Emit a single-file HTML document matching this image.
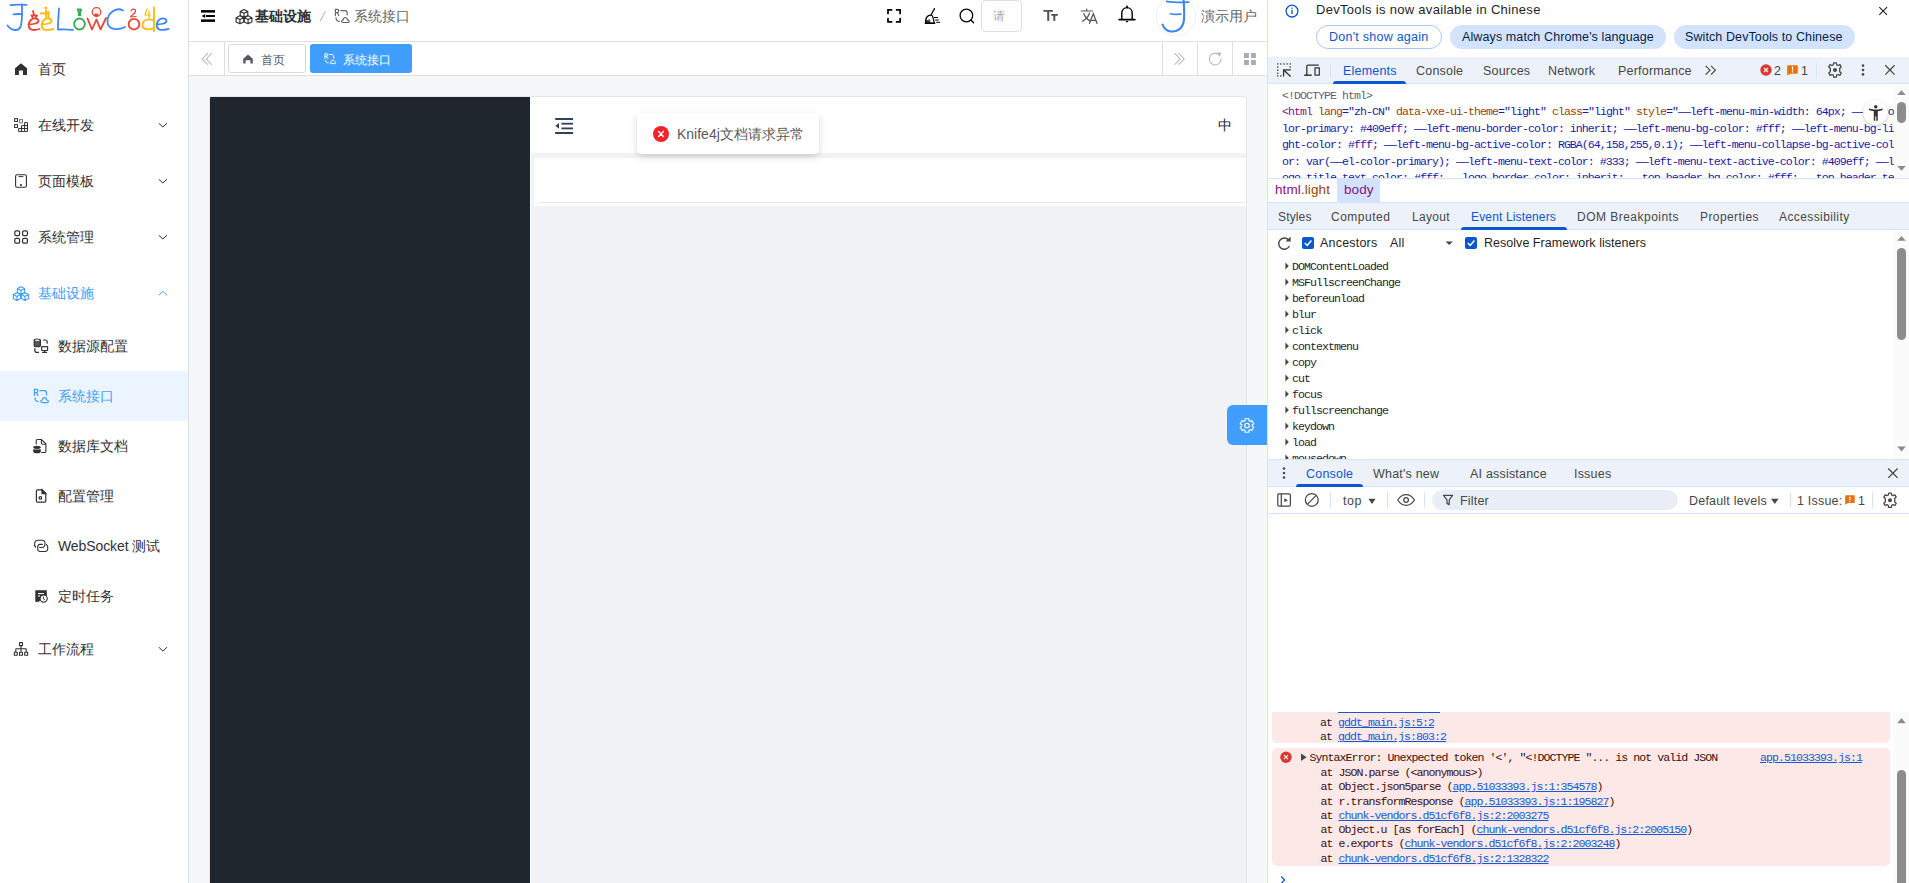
<!DOCTYPE html>
<html><head><meta charset="utf-8">
<style>
*{box-sizing:border-box;margin:0;padding:0}
html,body{width:1909px;height:883px;overflow:hidden}
body{position:relative;font-family:"Liberation Sans",sans-serif;background:#fff;color:#303133}
.a{position:absolute}
svg{position:absolute;overflow:visible}
.mi{position:absolute;left:0;width:188px;font-size:14px;line-height:16px;color:#303133;white-space:nowrap}
.mt{font-size:12.5px;letter-spacing:.2px;line-height:16px;color:#474747;white-space:nowrap}
.dom{font-family:"Liberation Mono",monospace;font-size:11.6px;letter-spacing:-.96px;line-height:16.4px;white-space:nowrap;color:#1a1aa6}
.at{color:#994500}.av{color:#1a1aa6}
.cm{font-family:"Liberation Mono",monospace;font-size:11.6px;letter-spacing:-.96px;line-height:14.3px;white-space:nowrap;color:#1f1f1f}
.cm u{color:#1558d6;text-decoration:underline}
.mono{font-family:"Liberation Mono",monospace}
</style></head><body>

<!-- ============ SIDEBAR ============ -->
<div class="a" id="side" style="left:0;top:0;width:189px;height:883px;background:#fff;border-right:1px solid #dcdfe6">
 <!-- logo -->
 <svg style="left:0;top:0" width="180" height="40" viewBox="0 0 180 40" fill="none" stroke-linecap="round" stroke-linejoin="round">
  <g stroke="#4285f4" stroke-width="1.8">
   <path d="M10.5,5.2 C14,4.6 21,4.4 26.5,4.8"/>
   <path d="M13.5,14.4 C16,14 19.5,13.9 22,14.2"/>
   <path d="M22,4.5 C22,12 22.5,22 20.5,27 C18.5,31 12,31.5 7.5,25.5"/>
  </g>
  <g stroke="#ea4335" stroke-width="1.8">
   <path d="M28.5,24.5 C32,24.5 38,23.5 38.5,21.5 C38.5,18.5 34.5,17.5 31.5,19.5 C28,22 27.5,28.5 31.5,29.7 C34,30.3 37,29.8 39.5,29"/>
   <path d="M33,11 L34,15 M31.5,15.5 L37,15.5 M32,16 L32.5,17.5 M36.5,16 L36,17.5"/>
  </g>
  <g stroke="#fbbc05" stroke-width="1.8">
   <path d="M41.5,24.5 C45,24.5 51,23.5 51.5,21.5 C51.5,18.5 47.5,17.5 44.5,19.5 C41,22 40.5,28.5 44.5,29.7 C47,30.3 50,29.8 53.5,29"/>
   <path d="M46,10.5 L46,17 M40.5,13.5 L49,13 M48.5,12 L48.5,18"/>
  </g>
  <circle cx="46" cy="8" r="1.5" fill="#fbbc05"/>
  <g fill="#fbbc05" opacity="0.6"><circle cx="34" cy="4" r=".5"/><circle cx="38" cy="3" r=".5"/><circle cx="43" cy="2" r=".5"/><circle cx="36" cy="6" r=".5"/><circle cx="40" cy="5" r=".5"/></g>
  <g stroke="#4285f4" stroke-width="1.8">
   <path d="M59,8.5 C58.5,15 58,23 58,29.5 C62,29.2 68,29.3 73,29.8"/>
  </g>
  <g stroke="#34a853" stroke-width="1.8">
   <ellipse cx="79.5" cy="24" rx="5.3" ry="5.5"/>
   <path d="M77.5,9.5 L81,9.5 M78,10 L79.5,15 L81,10 M78.5,15 L80.5,15"/>
  </g>
  <g stroke="#ea4335" stroke-width="1.8">
   <path d="M87.5,18.5 L92,29.5 L96.5,19.5 L100.5,29.5 L106,18"/>
   <circle cx="96.5" cy="12" r="4.3" stroke-width="1.2"/>
   <path d="M95,14 L98,14 L98,16 L95,16 Z" fill="#ea4335" stroke-width=".8"/>
  </g>
  <g stroke="#4285f4" stroke-width="1.8">
   <path d="M123,10.5 C117,7 107,12 107.5,22 C108,30 118,30.5 125,27"/>
  </g>
  <g stroke="#ea4335" stroke-width="1.8">
   <ellipse cx="134" cy="24.2" rx="5.3" ry="5.3"/>
   <path d="M131,11 C132,8.5 136,8.5 135.5,11.5 C135,13.5 131.5,15.5 130.5,17 L136,16.5" stroke-width="1.2"/>
  </g>
  <g stroke="#fbbc05" stroke-width="1.8">
   <path d="M154,7.5 L154,31"/>
   <path d="M154,21 C150,18 143,19.5 142.5,24.5 C142,29 148.5,31 154,28"/>
   <path d="M147,9 L145,15 L150.5,15 M149,11 L149,18" stroke-width="1.2"/>
  </g>
  <g stroke="#4285f4" stroke-width="1.8">
   <path d="M156.5,24.5 C160,24.5 166,23.5 166.5,21.5 C166.5,18.5 162.5,17.5 159.5,19.5 C156,22 155.5,28.5 159.5,29.7 C162,30.3 165,29.8 168.5,29"/>
  </g>
 </svg>

 <!-- 首页 -->
 <svg style="left:0;top:0" width="1" height="1"><path d="M21,63.2 L27,68.3 L27,75 L23,75 L23,70.6 L18.9,70.6 L18.9,75 L15,75 L15,68.3 Z" fill="#303133"/></svg>
 <div class="mi" style="top:61px;left:38px">首页</div>

 <!-- 在线开发 -->
 <svg style="left:0;top:0" width="1" height="1" fill="none" stroke="#303133" stroke-width="1">
  <rect x="14.6" y="118.6" width="2.9" height="2.9"/>
  <rect x="19.6" y="119.6" width="2.9" height="3.3" stroke="#777"/>
  <rect x="14.6" y="124.6" width="2.9" height="2.9"/>
  <path d="M24.6,122.6 H27.5 V131.4 H18.6 V128.5 H27.5 M24.6,122.6 V131.4 M21.5,125.6 H27.5 M21.5,125.6 V131.4"/>
 </svg>
 <div class="mi" style="top:117px;left:38px">在线开发</div>

 <!-- 页面模板 -->
 <svg style="left:0;top:0" width="1" height="1" fill="none" stroke="#303133" stroke-width="1.1">
  <rect x="15.6" y="174.7" width="10.8" height="12.5" rx="1.5"/>
  <path d="M18.6,176.6 H23.4" stroke-width="1"/>
  <rect x="20.1" y="184.1" width="1.8" height="1.8" fill="#303133" stroke="none"/>
 </svg>
 <div class="mi" style="top:173px;left:38px">页面模板</div>

 <!-- 系统管理 -->
 <svg style="left:0;top:0" width="1" height="1" fill="none" stroke="#303133" stroke-width="1.2">
  <rect x="14.8" y="230.8" width="4.8" height="4.8" rx="1.3"/>
  <rect x="22.6" y="230.8" width="4.8" height="4.8" rx="1.3"/>
  <rect x="14.8" y="238.4" width="4.8" height="4.8" rx="1.3"/>
  <rect x="22.6" y="238.4" width="4.8" height="4.8" rx="1.3"/>
 </svg>
 <div class="mi" style="top:229px;left:38px">系统管理</div>

 <!-- 基础设施 (active parent) -->
 <svg style="left:0;top:0" width="1" height="1" fill="none" stroke="#409eff" stroke-width="1.1" stroke-linejoin="round">
  <path d="M21,286.8 L24.6,288.6 V292.6 L21,294.4 L17.4,292.6 V288.6 Z M17.4,288.6 L21,290.4 L24.6,288.6 M21,290.4 V294.4"/>
  <path d="M17,292.8 L20.6,294.6 V298.6 L17,300.4 L13.4,298.6 V294.6 Z M13.4,294.6 L17,296.4 L20.6,294.6 M17,296.4 V300.4"/>
  <path d="M25,292.8 L28.6,294.6 V298.6 L25,300.4 L21.4,298.6 V294.6 Z M21.4,294.6 L25,296.4 L28.6,294.6 M25,296.4 V300.4"/>
 </svg>
 <div class="mi" style="top:285px;left:38px;color:#409eff">基础设施</div>

 <!-- sub: 数据源配置 -->
 <svg style="left:0;top:0" width="1" height="1" fill="none" stroke="#303133" stroke-width="1.2" stroke-linecap="round">
  <path d="M34.2,340.4 C34.2,338.6 40.4,338.6 40.4,340.4 V345.4 C40.4,347.2 34.2,347.2 34.2,345.4 Z" fill="#555"/>
  <ellipse cx="37.3" cy="340.3" rx="2.4" ry=".8" fill="#fff" stroke="none"/>
  <path d="M43.5,340 H45.3 C46.5,340 47.2,341 47.2,342 V343.2"/>
  <path d="M34.8,348.6 V350.2 C34.8,351.4 35.6,352.4 37,352.4 H38.5"/>
  <rect x="41.6" y="346.6" width="6" height="3.9" rx=".5"/>
  <path d="M42.6,352.4 H46.6 M44.6,350.6 V352.4"/>
 </svg>
 <div class="mi" style="top:338px;left:58px">数据源配置</div>

 <!-- sub: 系统接口 (active) -->
 <div class="a" style="left:0;top:371px;width:188px;height:50px;background:#ecf5ff"></div>
 <svg style="left:0;top:0" width="1" height="1" fill="none" stroke="#409eff" stroke-width="1.2" stroke-linecap="round" stroke-linejoin="round">
  <path d="M34.4,395.6 V389.4 H36.3 C37.5,389.4 38,390.2 38,391.1 C38,392 37.5,392.6 36.3,392.6 H34.4 M36.4,392.7 L38,395.6"/>
  <path d="M40,390.6 H44.2 C45.6,390.6 46.5,391.6 46.5,393 V395"/>
  <path d="M35,397.9 C35,400 36,401.3 38.4,401.5"/>
  <path d="M42.3,402.6 H47.2 C48.3,402.6 48.6,401.6 48.2,400.8 C47.8,400.1 47,400 46.6,400 C46.4,398.4 45.6,397.6 44.5,397.6 C43.4,397.6 42.6,398.4 42.4,400 C41.4,400 40.8,400.6 40.9,401.5 C41,402.2 41.6,402.6 42.3,402.6 Z"/>
 </svg>
 <div class="mi" style="top:388px;left:58px;color:#409eff">系统接口</div>

 <!-- sub: 数据库文档 -->
 <svg style="left:0;top:0" width="1" height="1" fill="none" stroke="#303133" stroke-width="1.1">
  <path d="M36.2,444.6 V440.6 C36.2,439.9 36.7,439.5 37.4,439.5 H41.4 L45.9,443.8 V451.2 C45.9,452 45.4,452.5 44.6,452.5 H41.2"/>
  <path d="M41.4,439.6 V443 C41.4,443.8 41.9,444.2 42.6,444.2 H45.8" />
  <ellipse cx="37" cy="447.3" rx="3.2" ry="1.1" fill="#303133"/>
  <path d="M33.8,449.2 V451.4 C33.8,453 40.2,453 40.2,451.4 V449.2 C40.2,450.4 33.8,450.4 33.8,449.2 Z" fill="#303133"/>
 </svg>
 <div class="mi" style="top:438px;left:58px">数据库文档</div>

 <!-- sub: 配置管理 -->
 <svg style="left:0;top:0" width="1" height="1" fill="none" stroke="#303133" stroke-width="1.2">
  <path d="M37.6,489.8 H42 L45.8,493.6 V501 C45.8,501.8 45.3,502.2 44.6,502.2 H37.6 C36.9,502.2 36.4,501.8 36.4,501 V491 C36.4,490.3 36.9,489.8 37.6,489.8 Z"/>
  <path d="M42,489.8 V493.6 H45.8 Z" fill="#303133"/>
  <circle cx="40.4" cy="497.9" r="1.3"/>
 </svg>
 <div class="mi" style="top:488px;left:58px">配置管理</div>

 <!-- sub: WebSocket 测试 -->
 <svg style="left:0;top:0" width="1" height="1" fill="none" stroke="#303133" stroke-width="1.1" stroke-linecap="round">
  <path d="M35.6,547.2 C34.4,546 34.4,544.5 34.6,543.2 C35,541.2 36.4,540.3 38,540.3 H42.4 C44,540.3 45,541.6 45,543.6 C45,545.8 43.9,547.5 42.2,547.5 H39.6"/>
  <path d="M42.4,544.4 H40.2 C38.6,544.4 37.6,545.8 37.6,548 C37.6,550.2 38.8,551.5 40.4,551.5 H45 C46.6,551.5 47.8,550.2 47.8,548 C47.8,546.3 47.2,545.2 46.4,544.4"/>
 </svg>
 <div class="mi" style="top:538px;left:58px;letter-spacing:-.1px">WebSocket 测试</div>

 <!-- sub: 定时任务 -->
 <svg style="left:0;top:0" width="1" height="1">
  <path d="M35.3,590.2 H46.8 V596 L44,596 L39.5,601 L38.5,602.2 L37.2,601.4 L36.3,602.2 L35.3,601.4 Z" fill="#303133"/>
  <rect x="38" y="593" width="6" height="1.1" fill="#fff"/>
  <rect x="38.2" y="595.2" width="1.6" height="1.6" fill="#ddd"/>
  <circle cx="43.7" cy="598.6" r="3.6" fill="#fff" stroke="#303133" stroke-width="1.1"/>
  <path d="M43.4,596.6 V598.8 L44.8,599.6" fill="none" stroke="#303133" stroke-width="1"/>
 </svg>
 <div class="mi" style="top:588px;left:58px">定时任务</div>

 <!-- 工作流程 -->
 <svg style="left:0;top:0" width="1" height="1" fill="none" stroke="#303133" stroke-width="1.1">
  <rect x="19.5" y="642.6" width="3" height="3" rx=".3"/>
  <path d="M21,645.8 V652 M15.8,652 V649.2 C15.8,648.9 16,648.7 16.3,648.7 H25.7 C26,648.7 26.2,648.9 26.2,649.2 V652"/>
  <rect x="14.3" y="652.3" width="3" height="3" rx=".3"/>
  <rect x="19.5" y="652.3" width="3" height="3" rx=".3"/>
  <rect x="24.7" y="652.3" width="3" height="3" rx=".3"/>
 </svg>
 <div class="mi" style="top:641px;left:38px">工作流程</div>

 <!-- chevrons -->
 <svg style="left:0;top:0" width="1" height="1" fill="none" stroke="#303133" stroke-width="1">
  <path d="M158.8,123.2 L162.9,127 L167,123.2"/>
  <path d="M158.8,179.2 L162.9,183 L167,179.2"/>
  <path d="M158.8,235.2 L162.9,239 L167,235.2"/>
  <path d="M158.8,295.2 L162.9,291.4 L167,295.2" stroke="#409eff"/>
  <path d="M158.8,647.2 L162.9,651 L167,647.2"/>
 </svg>
</div>

<!-- ============ HEADER ============ -->
<div class="a" id="hdr" style="left:189px;top:0;width:1078px;height:42px;background:#fff;border-bottom:1px solid #dcdfe6">
 <svg style="left:-189px;top:0" width="1" height="1">
  <!-- indent icon -->
  <rect x="201" y="10.1" width="14" height="2.5" fill="#000"/>
  <rect x="206" y="15" width="9" height="2" fill="#000"/>
  <path d="M205.2,13.9 V18 L201.6,15.95 Z" fill="#000"/>
  <rect x="201" y="19.4" width="14" height="2.5" fill="#000"/>
  <!-- cubes -->
  <g fill="none" stroke="#303133" stroke-width="1.15" stroke-linejoin="round">
   <path d="M244,9.5 L247.8,11.4 V15.6 L244,17.5 L240.2,15.6 V11.4 Z M240.2,11.4 L244,13.3 L247.8,11.4 M244,13.3 V17.5"/>
   <path d="M239.9,15.8 L243.7,17.7 V21.9 L239.9,23.8 L236.1,21.9 V17.7 Z M236.1,17.7 L239.9,19.6 L243.7,17.7 M239.9,19.6 V23.8"/>
   <path d="M248.1,15.8 L251.9,17.7 V21.9 L248.1,23.8 L244.3,21.9 V17.7 Z M244.3,17.7 L248.1,19.6 L251.9,17.7 M248.1,19.6 V23.8"/>
  </g>
  <!-- slash -->
  <path d="M320,21.5 L325.6,11" stroke="#c0c4cc" stroke-width="1.3"/>
  <!-- R cloud -->
  <g fill="none" stroke="#606266" stroke-width="1.15" stroke-linecap="round" stroke-linejoin="round">
   <path d="M335.4,15.6 V9.4 H337.2 C338.3,9.4 338.8,10.2 338.8,11.1 C338.8,12 338.3,12.6 337.2,12.6 H335.4 M337.3,12.7 L338.8,15.6"/>
   <path d="M340.9,10.6 H345 C346.3,10.6 347.2,11.6 347.2,13 V15"/>
   <path d="M336,17.8 C336,19.9 337,21.2 339.3,21.4"/>
   <path d="M343.2,22.5 H348 C349.1,22.5 349.4,21.5 349,20.7 C348.6,20 347.8,19.9 347.4,19.9 C347.2,18.3 346.4,17.5 345.3,17.5 C344.2,17.5 343.4,18.3 343.2,19.9 C342.2,19.9 341.6,20.5 341.7,21.4 C341.8,22.1 342.4,22.5 343.2,22.5 Z"/>
  </g>
  <!-- fullscreen -->
  <g fill="none" stroke="#000" stroke-width="1.75" stroke-linecap="round">
   <path d="M888,13.4 V9.9 H891.6 M896.6,9.9 H900.1 V13.4 M900.1,18.5 V21.9 H896.6 M891.6,21.9 H888 V18.5"/>
  </g>
  <!-- broom -->
  <g stroke="#000" fill="none" stroke-linecap="round">
   <path d="M934.5,8.6 L930.6,15.8" stroke-width="1.2"/>
   <path d="M928.6,15.6 C930.6,14.6 932.2,15.2 932.7,16.6 L934.5,23.4 H925.5 C925.3,20.4 926,17 928.6,15.6 Z" fill="#fff" stroke-width="1.2"/>
   <path d="M926.3,23 V20.6 C926.3,19.6 927.4,19.6 927.4,20.6 V23 M928.4,23 V20.4 C928.4,19.4 929.8,19.4 929.8,20.4 V23" stroke-width=".9"/>
   <path d="M925.4,23.3 H934.6" stroke-width="1.4"/>
   <path d="M934.4,17.5 H937.6 M935.6,20 H938.4 M936.6,22.3 H939.8" stroke-width="1"/>
  </g>
  <!-- search -->
  <circle cx="966.4" cy="15.5" r="6.3" fill="none" stroke="#000" stroke-width="1.3"/>
  <path d="M970.9,20 L973.6,22.7" stroke="#000" stroke-width="1.3" stroke-linecap="round"/>
  <!-- Tt -->
  <g fill="#555">
   <rect x="1043.4" y="10" width="9.5" height="1.8"/>
   <rect x="1047.2" y="10" width="2.1" height="10.9"/>
   <rect x="1051.3" y="14" width="6.5" height="1.8"/>
   <rect x="1053.3" y="14" width="2" height="6.9"/>
  </g>
  <!-- translate -->
  <g fill="none" stroke="#555" stroke-width="1.2" stroke-linecap="round">
   <path d="M1081.3,11 H1092.4 M1086.7,9.2 V11 M1083.8,13.5 C1085,17 1087.3,19.4 1089.6,20.6 M1089.6,13 C1088.4,16.6 1086,19.5 1082.3,21.3"/>
   <path d="M1089.5,23.3 L1093.3,13.8 L1097,23.3 M1090.6,20.3 H1096" stroke-width="1.3"/>
  </g>
  <!-- bell -->
  <g fill="none" stroke="#000" stroke-width="1.4" stroke-linecap="round">
   <path d="M1121.8,19.2 V13.2 C1121.8,9.8 1124.2,7.6 1127,7.6 C1129.8,7.6 1132.2,9.8 1132.2,13.2 V19.2"/>
   <path d="M1119.2,19.6 H1134.8" stroke-width="1.8"/>
   <path d="M1127,6.5 V7.5" stroke-width="1.8"/>
   <path d="M1126.4,21.6 H1127.6" stroke-width="1.2"/>
  </g>
  <!-- avatar -->
  <circle cx="1175.9" cy="16" r="19.6" fill="#fff" stroke="#efefef" stroke-width="1"/>
  <g fill="none" stroke="#3b86f2" stroke-linecap="round">
   <path d="M1166.6,1.3 C1173,2.4 1181,2.4 1188.6,2.2" stroke-width="1.8"/>
   <path d="M1170.4,13.8 C1173.5,14.6 1177.5,14.4 1180.8,14.2" stroke-width="1.7"/>
   <path d="M1183.6,0.5 C1184.2,8 1184.4,16 1183.8,21 C1182.6,28.8 1177,32.2 1170.5,31.4 C1166.5,30.8 1163.8,27.8 1162.5,24.6" stroke-width="2.1"/>
  </g>
 </svg>
 <div class="a" style="left:66px;top:7px;font-size:14px;font-weight:bold;color:#303133;line-height:18px;white-space:nowrap">基础设施</div>
 <div class="a" style="left:165px;top:7px;font-size:14px;color:#606266;line-height:18px;white-space:nowrap">系统接口</div>
 <!-- search input -->
 <div class="a" style="left:792px;top:0px;width:41px;height:32px;border:1px solid #dcdfe6;border-radius:4px;background:#fff"></div>
 <div class="a" style="left:804px;top:8px;font-size:12px;color:#a8abb2;line-height:16px">请</div>
 <div class="a" style="left:1012px;top:7px;font-size:14px;color:#606266;line-height:18px;white-space:nowrap">演示用户</div>
</div>

<!-- ============ TABS ============ -->
<div class="a" id="tabs" style="left:189px;top:42px;width:1078px;height:34px;background:#fff;border-bottom:1px solid #dcdfe6">
 <div class="a" style="left:35px;top:0;width:1px;height:33px;background:#dcdfe6"></div>
 <div class="a" style="left:973px;top:0;width:1px;height:33px;background:#dcdfe6"></div>
 <div class="a" style="left:1008px;top:0;width:1px;height:33px;background:#dcdfe6"></div>
 <div class="a" style="left:1043px;top:0;width:1px;height:33px;background:#dcdfe6"></div>
 <!-- tab home -->
 <div class="a" style="left:39px;top:2px;width:78px;height:29px;border:1px solid #d9d9d9;border-radius:3px;background:#fff"></div>
 <div class="a" style="left:72px;top:11px;font-size:12px;line-height:14px;color:#555;white-space:nowrap">首页</div>
 <!-- tab active -->
 <div class="a" style="left:121px;top:2px;width:102px;height:29px;border-radius:3px;background:#409eff"></div>
 <div class="a" style="left:154px;top:11px;font-size:12px;line-height:14px;color:#fff;white-space:nowrap">系统接口</div>
 <svg style="left:-189px;top:-42px" width="1" height="1">
  <g fill="none" stroke="#b4b7bd" stroke-width="1.05" stroke-linecap="round">
   <path d="M207.6,53.3 L202.2,58.9 L207.6,64.5 M211.6,53.3 L206.2,58.9 L211.6,64.5"/>
   <path d="M1174.8,53.3 L1180.2,58.9 L1174.8,64.5 M1178.8,53.3 L1184.2,58.9 L1178.8,64.5"/>
   <path d="M1220.9,59.2 A5.8,5.8 0 1 1 1218.4,54.4" stroke-width="1.1"/>
  </g>
  <path d="M1216.9,52.4 L1221.3,52.6 L1219.7,56.7 Z" fill="#b4b7bd"/>
  <g fill="#a8abb2">
   <rect x="1244" y="53" width="4.9" height="4.9" rx=".3"/>
   <rect x="1251" y="53" width="4.9" height="4.9" rx=".3"/>
   <rect x="1244" y="60" width="4.9" height="4.9" rx=".3"/>
   <rect x="1251" y="60" width="4.9" height="4.9" rx=".3"/>
  </g>
  <path d="M248,54.5 L252.8,58.8 V63.6 H250.4 V60.2 H245.6 V63.6 H243.2 V58.8 Z" fill="#55585e"/>
  <g fill="none" stroke="#fff" stroke-width="1" stroke-linecap="round" stroke-linejoin="round">
   <path d="M325,58.6 V53.6 H326.5 C327.4,53.6 327.8,54.2 327.8,54.9 C327.8,55.6 327.4,56.2 326.5,56.2 H325 M326.6,56.3 L327.8,58.6"/>
   <path d="M329.3,54.5 H332 C333,54.5 333.7,55.3 333.7,56.3 V58.2"/>
   <path d="M325.6,60.2 C325.6,61.9 326.4,62.9 328.2,63"/>
   <path d="M331.3,63.6 H334.8 C335.6,63.6 335.9,62.9 335.6,62.3 C335.3,61.8 334.8,61.7 334.5,61.7 C334.3,60.6 333.8,60.1 332.9,60.1 C332.1,60.1 331.5,60.6 331.4,61.7 C330.7,61.7 330.2,62.1 330.3,62.8 C330.4,63.3 330.8,63.6 331.3,63.6 Z"/>
  </g>
 </svg>
</div>

<!-- ============ CONTENT ============ -->
<div class="a" id="content" style="left:189px;top:76px;width:1078px;height:807px;background:#f5f7f9">
 <!-- card -->
 <div class="a" style="left:20px;top:20px;width:1038px;height:800px;border:1px solid #e2e5ea;border-radius:2px;background:#f0f2f5;overflow:hidden">
  <div class="a" style="left:0;top:0;width:320px;height:800px;background:#1f262d"></div>
  <div class="a" style="left:320px;top:0;width:716px;height:56px;background:#fff"></div>
  <div class="a" style="left:320px;top:56px;width:1px;height:744px;background:#fff"></div>
  <div class="a" style="left:324px;top:61px;width:712px;height:48px;background:#fff"></div>
  <div class="a" style="left:329px;top:105px;width:706px;height:1px;background:#e8e8e8"></div>
  <div class="a" style="left:1008px;top:19px;font-size:14px;line-height:18px;color:#222">中</div>
  <svg style="left:-210px;top:-97px" width="1" height="1" fill="#304156">
   <rect x="555.2" y="118" width="17.8" height="2"/>
   <rect x="561.4" y="122.8" width="11.6" height="1.8"/>
   <rect x="561.4" y="127.5" width="11.6" height="1.8"/>
   <rect x="555.2" y="132" width="17.8" height="2"/>
   <path d="M559,122.9 V128.8 L555.4,125.85 Z"/>
  </svg>
 </div>
 <!-- toast -->
 <div class="a" style="left:448px;top:37px;width:182px;height:41px;background:#fff;border-radius:4px;box-shadow:0 3px 8px rgba(0,0,0,.13),0 1px 3px rgba(0,0,0,.06)"></div>
 <svg style="left:-189px;top:-76px" width="1" height="1">
  <circle cx="661" cy="134" r="8" fill="#f5222d"/>
  <path d="M658.6,131.6 L663.4,136.4 M663.4,131.6 L658.6,136.4" stroke="#fff" stroke-width="1.4" stroke-linecap="round"/>
 </svg>
 <div class="a" style="left:488px;top:50px;font-size:14px;line-height:16px;color:#595959;white-space:nowrap">Knife4j文档请求异常</div>
 <!-- gear button -->
 <div class="a" style="left:1038px;top:329px;width:40px;height:40px;background:#409eff;border-radius:6px 0 0 6px"></div>
 <svg style="left:-189px;top:-76px" width="1" height="1" fill="none" stroke="#fff" stroke-width="1.1" stroke-linejoin="round">
  <path d="M1245.13,420.54 L1245.01,418.79 L1248.99,418.79 L1248.87,420.54 L1250.36,421.40 L1251.82,420.42 L1253.81,423.87 L1252.23,424.64 L1252.23,426.36 L1253.81,427.13 L1251.82,430.58 L1250.36,429.60 L1248.87,430.46 L1248.99,432.21 L1245.01,432.21 L1245.13,430.46 L1243.64,429.60 L1242.18,430.58 L1240.19,427.13 L1241.77,426.36 L1241.77,424.64 L1240.19,423.87 L1242.18,420.42 L1243.64,421.40 Z"/>
  <circle cx="1247" cy="425.5" r="2.3"/>
 </svg>
</div>

<!-- ============ DEVTOOLS ============ -->
<div class="a" id="dt" style="left:1267px;top:0;width:642px;height:883px;background:#fff;border-left:1px solid #d3e3fd">
 <!-- infobar -->
 <div class="a" style="left:48px;top:2px;font-size:13px;letter-spacing:.3px;line-height:16px;color:#1f1f1f;white-space:nowrap">DevTools is now available in Chinese</div>
 <div class="a" style="left:48px;top:25px;width:126px;height:24px;border:1px solid #a8c7fa;border-radius:12px"></div>
 <div class="a" style="left:61px;top:29px;font-size:12.5px;letter-spacing:.25px;line-height:16px;color:#0b57d0;white-space:nowrap">Don't show again</div>
 <div class="a" style="left:182px;top:25px;width:216px;height:24px;background:#d3e3fd;border-radius:12px"></div>
 <div class="a" style="left:194px;top:29px;font-size:12.5px;letter-spacing:.11px;line-height:16px;color:#041e49;white-space:nowrap">Always match Chrome's language</div>
 <div class="a" style="left:406px;top:25px;width:181px;height:24px;background:#d3e3fd;border-radius:12px"></div>
 <div class="a" style="left:417px;top:29px;font-size:12.5px;letter-spacing:.1px;line-height:16px;color:#041e49;white-space:nowrap">Switch DevTools to Chinese</div>
 <!-- main toolbar -->
 <div class="a" style="left:0;top:57px;width:642px;height:27px;background:#edf1f9;border-bottom:1px solid #d3e3fd"></div>
 <div class="a" style="left:62px;top:63px;width:1px;height:15px;background:#d3e3fd"></div>
 <div class="a" style="left:548px;top:63px;width:1px;height:15px;background:#d3e3fd"></div>
 <div class="a" style="left:65px;top:81px;width:73px;height:3px;background:#0b57d0;border-radius:3px 3px 0 0"></div>
 <div class="a mt" style="left:75px;top:63px;color:#0b57d0">Elements</div>
 <div class="a mt" style="left:148px;top:63px">Console</div>
 <div class="a mt" style="left:215px;top:63px">Sources</div>
 <div class="a mt" style="left:280px;top:63px">Network</div>
 <div class="a mt" style="left:350px;top:63px">Performance</div>
 <div class="a mt" style="left:506px;top:63px">2</div>
 <div class="a mt" style="left:533px;top:63px">1</div>
 <svg style="left:-1268px;top:0" width="1" height="1">
  <!-- info icon -->
  <circle cx="1292" cy="11.1" r="5.9" fill="none" stroke="#0b57d0" stroke-width="1.3"/>
  <rect x="1291.35" y="9.8" width="1.3" height="4.2" fill="#0b57d0"/>
  <rect x="1291.35" y="7.6" width="1.3" height="1.3" fill="#0b57d0"/>
  <!-- close infobar -->
  <path d="M1879.3,7.2 L1887,14.9 M1887,7.2 L1879.3,14.9" stroke="#1f1f1f" stroke-width="1.1"/>
  <!-- inspect -->
  <g fill="#333">
   <rect x="1277" y="63.3" width="1.3" height="1.3"/><rect x="1280.1" y="63.3" width="1.3" height="1.3"/><rect x="1283.3" y="63.3" width="1.3" height="1.3"/><rect x="1286.4" y="63.3" width="1.3" height="1.3"/><rect x="1289.6" y="63.3" width="1.3" height="1.3"/>
   <rect x="1277" y="66.4" width="1.3" height="1.3"/><rect x="1277" y="69.6" width="1.3" height="1.3"/><rect x="1277" y="72.7" width="1.3" height="1.3"/><rect x="1277" y="75.3" width="1.3" height="1.3"/>
   <rect x="1289.6" y="66.4" width="1.3" height="1.3"/><rect x="1280.1" y="75.3" width="1.3" height="1.3"/>
  </g>
  <path d="M1290.8,69.8 H1283.6 V76.6 M1283.8,70 L1290.6,76.4" fill="none" stroke="#333" stroke-width="1.35"/>
  <!-- device -->
  <path d="M1306.8,75 V66.6 C1306.8,65.8 1307.3,65.2 1308.1,65.2 H1318.8" fill="none" stroke="#333" stroke-width="1.3"/>
  <path d="M1304.2,75.2 H1311.7" stroke="#333" stroke-width="1.5"/>
  <rect x="1315" y="67.9" width="4.3" height="7.2" fill="none" stroke="#333" stroke-width="1.2"/>
  <!-- >> -->
  <path d="M1705.6,65.8 L1710,70.2 L1705.6,74.6 M1711,65.8 L1715.4,70.2 L1711,74.6" fill="none" stroke="#474747" stroke-width="1.2"/>
  <!-- error count -->
  <circle cx="1766" cy="70" r="5.7" fill="#dc362e"/>
  <path d="M1764,68 L1768,72 M1768,68 L1764,72" stroke="#fff" stroke-width="1.1"/>
  <path d="M1788,65.2 H1797 C1797.5,65.2 1797.8,65.5 1797.8,66 V73 C1797.8,73.5 1797.5,73.8 1797,73.8 H1790.3 L1787.2,75.5 V66 C1787.2,65.5 1787.5,65.2 1788,65.2 Z" fill="#e8710a"/>
  <rect x="1791.9" y="66.6" width="1.3" height="3.8" fill="#fff"/>
  <rect x="1791.9" y="71.2" width="1.3" height="1.3" fill="#fff"/>
  <!-- gear -->
  <g transform="translate(1835,70)">
   <path d="M-1.3,-7.1 H1.3 L1.7,-5.2 L3.1,-4.5 L4.9,-5.3 L6.2,-3.1 L4.7,-1.8 V1.8 L6.2,3.1 L4.9,5.3 L3.1,4.5 L1.7,5.2 L1.3,7.1 H-1.3 L-1.7,5.2 L-3.1,4.5 L-4.9,5.3 L-6.2,3.1 L-4.7,1.8 V-1.8 L-6.2,-3.1 L-4.9,-5.3 L-3.1,-4.5 L-1.7,-5.2 Z" fill="none" stroke="#474747" stroke-width="1.3" stroke-linejoin="round"/>
   <circle r="2" fill="#474747"/>
  </g>
  <!-- kebab -->
  <circle cx="1863" cy="65.6" r="1.3" fill="#474747"/><circle cx="1863" cy="70" r="1.3" fill="#474747"/><circle cx="1863" cy="74.4" r="1.3" fill="#474747"/>
  <!-- close -->
  <path d="M1885.3,65.3 L1894.6,74.6 M1894.6,65.3 L1885.3,74.6" stroke="#474747" stroke-width="1.3"/>
 </svg>
</div>

<!-- ============ DT_DOM ============ -->
<div class="a" style="left:1268px;top:84px;width:626px;height:94px;overflow:hidden"><div class="a dom" style="left:14px;top:4px">
<div style="color:#5f6368">&lt;!DOCTYPE html&gt;</div>
<div><span style="color:#881280">&lt;html</span> <span class="at">lang</span>=<span class="av">"zh-CN"</span> <span class="at">data-vxe-ui-theme</span>=<span class="av">"light"</span> <span class="at">class</span>=<span class="av">"light"</span> <span class="at">style</span>=<span class="av">"——left-menu-min-width: 64px; ——el-co</span></div>
<div class="av">lor-primary: #409eff; ——left-menu-border-color: inherit; ——left-menu-bg-color: #fff; ——left-menu-bg-li</div>
<div class="av">ght-color: #fff; ——left-menu-bg-active-color: RGBA(64,158,255,0.1); ——left-menu-collapse-bg-active-col</div>
<div class="av">or: var(——el-color-primary); ——left-menu-text-color: #333; ——left-menu-text-active-color: #409eff; ——l</div>
<div class="av">ogo-title-text-color: #fff; ——logo-border-color: inherit; ——top-header-bg-color: #fff; ——top-header-te</div>
</div></div>
<!-- scrollbar dom -->
<div class="a" style="left:1894px;top:84px;width:15px;height:94px;background:#fbfbfb"></div>
<div class="a" style="left:1897px;top:102px;width:9px;height:21px;background:#8c8c8c;border-radius:4.5px"></div>
<svg style="left:0;top:0" width="1" height="1" fill="#8c8c8c">
 <path d="M1897.2,95 L1901.5,90.3 L1905.8,95 Z"/>
 <path d="M1897.2,166 L1901.5,170.8 L1905.8,166 Z"/>
</svg>
<!-- accessibility bubble -->
<div class="a" style="left:1863px;top:100px;width:25px;height:25px;border-radius:50%;background:#fff;box-shadow:0 1px 3px rgba(0,0,0,.25)"></div>
<svg style="left:0;top:0" width="1" height="1" fill="#333">
 <circle cx="1875.8" cy="106.7" r="1.7"/>
 <path d="M1869.2,108.4 C1871.5,109.2 1873.6,109.5 1875.8,109.5 C1878,109.5 1880.1,109.2 1882.4,108.4 L1882.8,110 C1881,110.7 1879.4,111.1 1877.8,111.3 V120.8 H1876.3 V116.2 H1875.3 V120.8 H1873.8 V111.3 C1872.2,111.1 1870.6,110.7 1868.8,110 Z"/>
</svg>
<div class="a" style="left:1268px;top:178px;width:641px;height:1px;background:#d3e3fd"></div>
<!-- breadcrumbs -->
<div class="a" style="left:1337px;top:179px;width:43px;height:23px;background:#d3e3fd"></div>
<div class="a" style="left:1275px;top:182px;font-size:13.5px;letter-spacing:.1px;line-height:16px;white-space:nowrap;color:#881280">html<span style="color:#994500">.light</span></div>
<div class="a" style="left:1344px;top:182px;font-size:13.5px;letter-spacing:.1px;line-height:16px;white-space:nowrap;color:#881280">body</div>
<!-- sidebar tabs -->
<div class="a" style="left:1268px;top:202px;width:641px;height:28px;background:#edf1f9;border-top:1px solid #d3e3fd;border-bottom:1px solid #d3e3fd"></div>
<div class="a" style="left:1461px;top:227px;width:106px;height:3px;background:#0b57d0;border-radius:3px 3px 0 0"></div>
<div class="a mt" style="left:1278px;top:209px;font-size:12px;letter-spacing:.15px">Styles</div>
<div class="a mt" style="left:1331px;top:209px;font-size:12px;letter-spacing:.5px">Computed</div>
<div class="a mt" style="left:1412px;top:209px;font-size:12px;letter-spacing:.3px">Layout</div>
<div class="a mt" style="left:1471px;top:209px;color:#0b57d0;font-size:12px;letter-spacing:.15px">Event Listeners</div>
<div class="a mt" style="left:1577px;top:209px;font-size:12px;letter-spacing:.48px">DOM Breakpoints</div>
<div class="a mt" style="left:1700px;top:209px;font-size:12px;letter-spacing:.42px">Properties</div>
<div class="a mt" style="left:1779px;top:209px;font-size:12px;letter-spacing:.4px">Accessibility</div>
<!-- event listener toolbar -->
<svg style="left:0;top:0" width="1" height="1">
 <path d="M1288.6,240 A5.6,5.6 0 1 0 1289.4,246" fill="none" stroke="#474747" stroke-width="1.4"/>
 <path d="M1290.6,236.6 V241.6 H1285.6 Z" fill="#474747"/>
 <rect x="1302" y="237" width="12" height="12" rx="2" fill="#0b57d0"/>
 <path d="M1304.8,243 L1307.2,245.4 L1311.4,240.6" fill="none" stroke="#fff" stroke-width="1.5"/>
 <rect x="1465" y="237" width="12" height="12" rx="2" fill="#0b57d0"/>
 <path d="M1467.8,243 L1470.2,245.4 L1474.4,240.6" fill="none" stroke="#fff" stroke-width="1.5"/>
 <path d="M1445.6,241.4 H1452.8 L1449.2,245 Z" fill="#474747"/>
</svg>
<div class="a mt" style="left:1320px;top:235px;color:#1f1f1f">Ancestors</div>
<div class="a mt" style="left:1390px;top:235px;color:#1f1f1f">All</div>
<div class="a mt" style="left:1484px;top:235px;color:#1f1f1f;letter-spacing:.03px">Resolve Framework listeners</div>
<!-- listeners list -->
<div class="a dom" style="left:1292px;top:259px;line-height:16px;color:#1f1f1f">
<div>DOMContentLoaded</div><div>MSFullscreenChange</div><div>beforeunload</div><div>blur</div><div>click</div><div>contextmenu</div><div>copy</div><div>cut</div><div>focus</div><div>fullscreenchange</div><div>keydown</div><div>load</div><div>mousedown</div>
</div>
<svg style="left:0;top:0" width="1" height="1" fill="#474747">
 <path d="M1285.4,262.6 V269.4 L1288.8,266 Z"/><path d="M1285.4,278.6 V285.4 L1288.8,282 Z"/><path d="M1285.4,294.6 V301.4 L1288.8,298 Z"/><path d="M1285.4,310.6 V317.4 L1288.8,314 Z"/><path d="M1285.4,326.6 V333.4 L1288.8,330 Z"/><path d="M1285.4,342.6 V349.4 L1288.8,346 Z"/><path d="M1285.4,358.6 V365.4 L1288.8,362 Z"/><path d="M1285.4,374.6 V381.4 L1288.8,378 Z"/><path d="M1285.4,390.6 V397.4 L1288.8,394 Z"/><path d="M1285.4,406.6 V413.4 L1288.8,410 Z"/><path d="M1285.4,422.6 V429.4 L1288.8,426 Z"/><path d="M1285.4,438.6 V445.4 L1288.8,442 Z"/><path d="M1285.4,454.6 V461.4 L1288.8,458 Z"/>
</svg>
<!-- listeners scrollbar -->
<div class="a" style="left:1894px;top:231px;width:15px;height:228px;background:#fbfbfb"></div>
<div class="a" style="left:1897px;top:248px;width:9px;height:92px;background:#8c8c8c;border-radius:4.5px"></div>
<svg style="left:0;top:0" width="1" height="1" fill="#8c8c8c">
 <path d="M1897.2,240.8 L1901.5,236 L1905.8,240.8 Z"/>
 <path d="M1897.2,446.6 L1901.5,451.6 L1905.8,446.6 Z"/>
</svg>

<!-- ============ DT_CONSOLE ============ -->
<!-- drawer toolbar -->
<div class="a" style="left:1268px;top:459px;width:641px;height:28px;background:#edf1f9;border-top:1px solid #d3e3fd;border-bottom:1px solid #d3e3fd"></div>
<div class="a" style="left:1296px;top:484px;width:67px;height:3px;background:#0b57d0;border-radius:3px 3px 0 0"></div>
<svg style="left:0;top:0" width="1" height="1" fill="#474747">
 <circle cx="1284" cy="468.5" r="1.25"/><circle cx="1284" cy="473" r="1.25"/><circle cx="1284" cy="477.6" r="1.25"/>
 <path d="M1888.2,468.5 L1897.6,477.9 M1897.6,468.5 L1888.2,477.9" stroke="#474747" stroke-width="1.3"/>
</svg>
<div class="a mt" style="left:1306px;top:466px;color:#0b57d0">Console</div>
<div class="a mt" style="left:1373px;top:466px">What's new</div>
<div class="a mt" style="left:1470px;top:466px">AI assistance</div>
<div class="a mt" style="left:1574px;top:466px">Issues</div>
<!-- console toolbar -->
<div class="a" style="left:1268px;top:513px;width:641px;height:1px;background:#d3e3fd"></div>
<div class="a" style="left:1432px;top:490px;width:246px;height:20px;background:#e9eef6;border-radius:10px"></div>
<svg style="left:0;top:0" width="1" height="1">
 <g fill="none" stroke="#474747" stroke-width="1.25">
  <rect x="1277.8" y="493.8" width="12.6" height="12.4" rx="1.2"/>
  <path d="M1281.3,493.8 V506.2"/>
  <circle cx="1311.8" cy="499.9" r="6.4"/>
  <path d="M1307.3,504.4 L1316.3,495.4"/>
  <path d="M1397.8,500 C1400,496.3 1402.8,494.6 1406.1,494.6 C1409.4,494.6 1412.2,496.3 1414.4,500 C1412.2,503.7 1409.4,505.4 1406.1,505.4 C1402.8,505.4 1400,503.7 1397.8,500 Z"/>
  <circle cx="1406.1" cy="500" r="2.3"/>
  <path d="M1443.5,495.3 H1452.6 L1449.2,499.8 V504.6 L1447,503.4 V499.8 Z" stroke-width="1.2" stroke-linejoin="round"/>
 </g>
 <path d="M1284.3,498.3 V502.2 L1287.8,500.25 Z" fill="#474747"/>
 <path d="M1368.4,498.8 H1375.6 L1372,503.9 Z" fill="#474747"/>
 <path d="M1771,498.8 H1778.6 L1774.8,503.9 Z" fill="#474747"/>
 <rect x="1330" y="492" width="1" height="16" fill="#d3e3fd"/>
 <rect x="1387" y="492" width="1" height="16" fill="#d3e3fd"/>
 <rect x="1424" y="492" width="1" height="16" fill="#d3e3fd"/>
 <rect x="1790" y="492" width="1" height="16" fill="#d3e3fd"/>
 <rect x="1872" y="492" width="1" height="16" fill="#d3e3fd"/>
 <path d="M1845.8,495.3 H1854 C1854.4,495.3 1854.7,495.6 1854.7,496 V502.4 C1854.7,502.8 1854.4,503.1 1854,503.1 H1848 L1845.2,504.8 V496 C1845.2,495.6 1845.5,495.3 1845.8,495.3 Z" fill="#e8710a"/>
 <rect x="1849.3" y="496.6" width="1.2" height="3.5" fill="#fff"/>
 <rect x="1849.3" y="500.9" width="1.2" height="1.2" fill="#fff"/>
 <g transform="translate(1890,500.2)">
  <path d="M-1.3,-7.1 H1.3 L1.7,-5.2 L3.1,-4.5 L4.9,-5.3 L6.2,-3.1 L4.7,-1.8 V1.8 L6.2,3.1 L4.9,5.3 L3.1,4.5 L1.7,5.2 L1.3,7.1 H-1.3 L-1.7,5.2 L-3.1,4.5 L-4.9,5.3 L-6.2,3.1 L-4.7,1.8 V-1.8 L-6.2,-3.1 L-4.9,-5.3 L-3.1,-4.5 L-1.7,-5.2 Z" fill="none" stroke="#474747" stroke-width="1.3" stroke-linejoin="round"/>
  <circle r="2" fill="#474747"/>
 </g>
</svg>
<div class="a mt" style="left:1343px;top:493px;color:#474747;letter-spacing:.6px">top</div>
<div class="a mt" style="left:1460px;top:493px">Filter</div>
<div class="a mt" style="left:1689px;top:493px;color:#474747">Default levels</div>
<div class="a mt" style="left:1797px;top:493px;color:#474747">1 Issue:</div>
<div class="a mt" style="left:1858px;top:493px;color:#474747">1</div>
<!-- console messages -->
<div class="a" style="left:1272px;top:712px;width:618px;height:31px;background:#fce8e6;border-radius:0 0 5px 5px"></div>
<div class="a" style="left:1338px;top:712px;width:102px;height:1px;background:#1558d6"></div>
<div class="a" style="left:1272px;top:748px;width:618px;height:118px;background:#fce8e6;border-radius:5px"></div>
<div class="a cm" style="left:1320px;top:716px">at <u>gddt_main.js:5:2</u><br>at <u>gddt_main.js:803:2</u></div>
<svg style="left:0;top:0" width="1" height="1">
 <circle cx="1286" cy="757.2" r="5.7" fill="#dc362e"/>
 <path d="M1284,755.2 L1288,759.2 M1288,755.2 L1284,759.2" stroke="#fff" stroke-width="1.1"/>
 <path d="M1301,753.6 V761 L1306.6,757.3 Z" fill="#474747"/>
</svg>
<div class="a cm" style="left:1309.5px;top:751px;color:#410e0b">SyntaxError: Unexpected token '&lt;', "&lt;!DOCTYPE "... is not valid JSON</div>
<div class="a cm" style="left:1760px;top:751px"><u>app.51033393.js:1</u></div>
<div class="a cm" style="left:1320.5px;top:766px;color:#410e0b">at JSON.parse (&lt;anonymous&gt;)<br>at Object.json5parse (<u>app.51033393.js:1:354578</u>)<br>at r.transformResponse (<u>app.51033393.js:1:195827</u>)<br>at <u>chunk-vendors.d51cf6f8.js:2:2003275</u><br>at Object.u [as forEach] (<u>chunk-vendors.d51cf6f8.js:2:2005150</u>)<br>at e.exports (<u>chunk-vendors.d51cf6f8.js:2:2003248</u>)<br>at <u>chunk-vendors.d51cf6f8.js:2:1328322</u></div>
<svg style="left:0;top:0" width="1" height="1">
 <path d="M1281.2,876.5 L1284.6,880 L1281.2,883.5" fill="none" stroke="#1558d6" stroke-width="1.3"/>
</svg>
<!-- console scrollbar -->
<div class="a" style="left:1894px;top:712px;width:15px;height:171px;background:#fbfbfb"></div>
<div class="a" style="left:1897px;top:770px;width:9px;height:130px;background:#8c8c8c;border-radius:4.5px"></div>
<svg style="left:0;top:0" width="1" height="1" fill="#8c8c8c">
 <path d="M1897.2,723.2 L1901.5,718 L1905.8,723.2 Z"/>
</svg>

<!-- ============ END ============ -->
</body></html>
